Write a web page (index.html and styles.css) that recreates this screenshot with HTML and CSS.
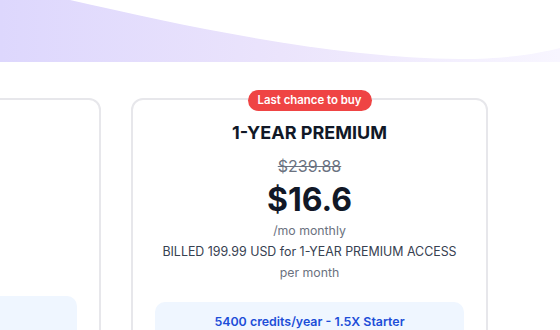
FILE: index.html
```html
<!DOCTYPE html>
<html lang="en">
<head>
    <meta charset="UTF-8">
    <meta name="viewport" content="width=device-width, initial-scale=1.0">
    <title>Pricing</title>
    <link rel="stylesheet" href="styles.css">
</head>
<body>
    <div class="hero">
        <svg class="wave" viewBox="0 0 560 62" preserveAspectRatio="none" aria-hidden="true">
            <defs>
                <linearGradient id="heroGrad" x1="0" y1="0" x2="1" y2="0">
                    <stop offset="0" stop-color="#ddd7fd"/>
                    <stop offset="0.5" stop-color="#ebe4fc"/>
                    <stop offset="1" stop-color="#f8f6ff"/>
                </linearGradient>
            </defs>
            <rect width="560" height="62" fill="url(#heroGrad)"/>
            <path d="M70 0 C180 25 330 58 460 59 C510 59 540 53 560 48 L560 0 Z" fill="#fff"/>
        </svg>
    </div>

    <main class="plans">
        <div class="plan">
            <div class="plan-body"></div>
            <div class="credits credits-empty"></div>
        </div>

        <div class="plan featured">
            <span class="badge">Last chance to buy</span>
            <h2 class="plan-name">1-YEAR PREMIUM</h2>
            <div class="old-price">$239.88</div>
            <div class="price">$16.6</div>
            <div class="note">/mo monthly</div>
            <div class="billed">BILLED 199.99 USD for 1-YEAR PREMIUM ACCESS</div>
            <div class="note">per month</div>
            <div class="credits">5400 credits/year - 1.5X Starter</div>
        </div>
    </main>
</body>
</html>
```

FILE: styles.css
```css
* {
    box-sizing: border-box;
}
body {
    margin: 0;
    background-color: #fff;
    font-family: Inter, "Noto Sans", Arial, sans-serif;
    color: #111827;
    overflow: hidden;
}
.hero {
    height: 62px;
}
.wave {
    display: block;
    width: 100%;
    height: 62px;
}
.plans {
    display: flex;
    align-items: flex-start;
    gap: 30px;
    margin-left: -256px;
    padding-top: 36px;
}
.plan {
    position: relative;
    flex: 0 0 357px;
    padding: 15px 22px 20px;
    border: 2px solid #e7e7eb;
    border-radius: 12px;
    text-align: center;
}
.plan.featured {
    padding-top: 21px;
}
.plan-body {
    height: 162px;
}
.badge {
    position: absolute;
    top: -10px;
    left: 50%;
    transform: translateX(-50%);
    padding: 0 10px;
    line-height: 21px;
    border-radius: 11px;
    background-color: #ef4444;
    color: #fff;
    font-size: 11.4px;
    font-weight: 600;
    white-space: nowrap;
}
.plan-name {
    margin: 0;
    font-size: 18px;
    line-height: 24px;
    font-weight: 700;
    color: #111827;
}
.old-price {
    margin-top: 9px;
    font-size: 16px;
    line-height: 24px;
    color: #6b7280;
    text-decoration: line-through;
}
.price {
    margin-top: 2px;
    font-size: 32px;
    line-height: 40px;
    font-weight: 700;
    color: #111827;
}
.note {
    font-size: 12.3px;
    line-height: 21px;
    color: #6b7280;
}
.billed {
    font-size: 12.4px;
    line-height: 21px;
    color: #374151;
}
.credits {
    margin-top: 19px;
    padding: 10px 12px 9px;
    border-radius: 10px;
    background-color: #eff6ff;
    color: #1d4ed8;
    font-size: 12.4px;
    line-height: 20px;
    font-weight: 600;
}
.credits-empty {
    height: 60px;
}
```
